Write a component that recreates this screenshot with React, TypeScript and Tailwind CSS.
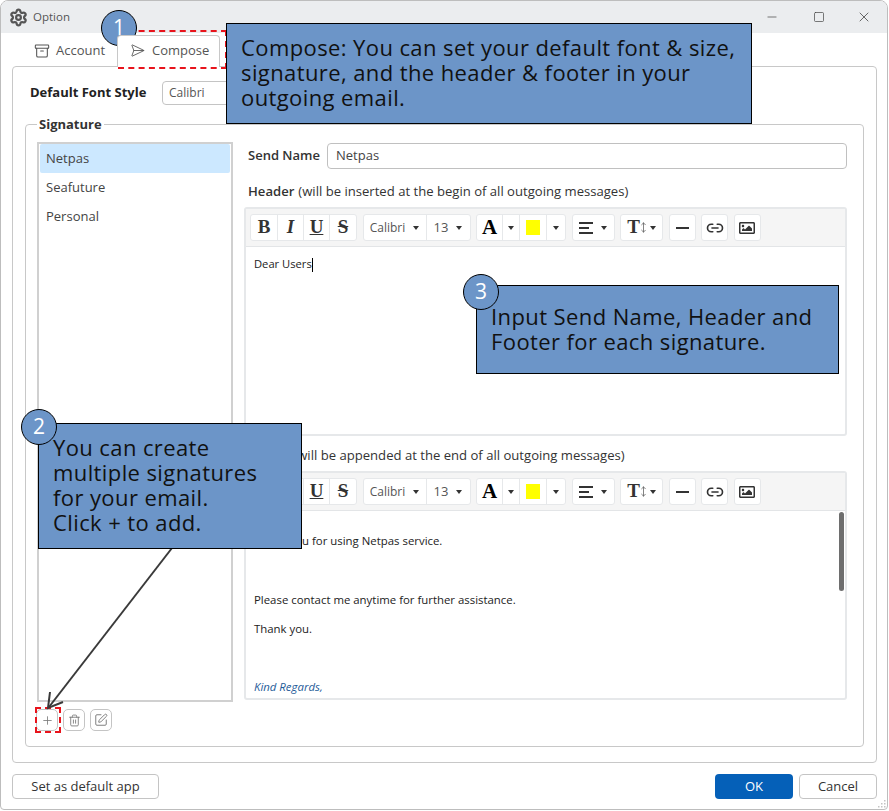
import React from "react";
import { Archive, Link2, Minus, MoveVertical, Plus, SendHorizontal, Settings, Square, SquarePen, Trash2, X } from "lucide-react";
import { FaRegImage } from "react-icons/fa";

const Caret = () => (
  <span className="inline-block w-0 h-0 border-x-[3.5px] border-x-transparent border-t-[4px] border-t-[#333]" />
);

const ToolBtn = ({ w, children, last }: { w: string; children: React.ReactNode; last?: boolean }) => (
  <div className={`${w} h-full flex items-center justify-center gap-[8px] ${last ? "" : "border-r border-[#e6e8ea]"}`}>
    {children}
  </div>
);

const Group = ({ children }: { children: React.ReactNode }) => (
  <div className="h-[27px] flex bg-white border border-[#e6e8ea] rounded-[3px] box-border">{children}</div>
);

const serif = "font-['Liberation_Serif',serif] font-bold text-[#333]";

const Toolbar = () => (
  <div className="h-[38px] shrink-0 flex items-center gap-[5.5px] pl-[4px] bg-[#f5f5f5] border-b border-[#e3e5e7]">
    <Group>
      <ToolBtn w="w-[27px]"><span className={`${serif} text-[19px]`}>B</span></ToolBtn>
      <ToolBtn w="w-[26px]"><span className={`${serif} italic text-[19px]`}>I</span></ToolBtn>
      <ToolBtn w="w-[26px]"><span className={`${serif} underline text-[19px]`}>U</span></ToolBtn>
      <ToolBtn w="w-[26px]" last><span className={`${serif} line-through text-[19px]`}>S</span></ToolBtn>
    </Group>
    <Group>
      <ToolBtn w="w-[63px]"><span className="text-[12px] text-[#555]">Calibri</span><Caret /></ToolBtn>
      <ToolBtn w="w-[43px]" last><span className="text-[13px] text-[#555]">13</span><Caret /></ToolBtn>
    </Group>
    <Group>
      <ToolBtn w="w-[26px]"><span className="font-['Liberation_Serif',serif] font-bold text-[21px] text-black">A</span></ToolBtn>
      <ToolBtn w="w-[17px]"><Caret /></ToolBtn>
      <ToolBtn w="w-[27px]"><span className="w-[14px] h-[15px] bg-[#ffff00]" /></ToolBtn>
      <ToolBtn w="w-[18px]" last><Caret /></ToolBtn>
    </Group>
    <Group>
      <ToolBtn w="w-[41px]" last>
        <span className="flex flex-col gap-[3px]">
          <span className="w-[14px] h-[2px] bg-[#333]" />
          <span className="w-[10px] h-[2px] bg-[#333]" />
          <span className="w-[14px] h-[2px] bg-[#333]" />
        </span>
        <Caret />
      </ToolBtn>
    </Group>
    <Group>
      <ToolBtn w="w-[41px]" last>
        <span className="flex items-center gap-[3px]">
          <span className="flex items-center">
            <span className={`${serif} text-[19px]`}>T</span>
            <MoveVertical size={11} strokeWidth={1.6} className="text-[#555] -mx-[2px]" />
          </span>
          <Caret />
        </span>
      </ToolBtn>
    </Group>
    <Group>
      <ToolBtn w="w-[25px]" last><span className="w-[13px] h-[2px] bg-[#333]" /></ToolBtn>
    </Group>
    <Group>
      <ToolBtn w="w-[25px]" last><Link2 size={18} strokeWidth={2.2} className="text-[#333]" /></ToolBtn>
    </Group>
    <Group>
      <ToolBtn w="w-[25px]" last><FaRegImage size={16} className="text-[#333]" /></ToolBtn>
    </Group>
  </div>
);

const SmallBtn = ({ children }: { children: React.ReactNode }) => (
  <div className="w-[22px] h-[22px] flex items-center justify-center border border-[#c4c4c4] rounded-[5px] text-[#777] bg-white box-border">
    {children}
  </div>
);

const EditorLabel = ({ label, note }: { label: string; note: string }) => (
  <div className="h-[18px] flex items-center pl-[4px] text-[13.1px] text-[#333]">
    <span className="font-semibold mr-[4px]">{label}</span>
    {note}
  </div>
);

const Badge = ({ pos, n }: { pos: string; n: string }) => (
  <div className={`absolute ${pos} w-[36px] h-[36px] rounded-full bg-[#6c95c8] border border-black flex items-center justify-center text-white text-[21px] box-border`}>
    {n}
  </div>
);

const callout = "absolute bg-[#6c95c8] border border-black box-border text-[22px] tracking-[0.4px] leading-[25px] text-[#111]";

export default function App() {
  return (
    <div className="relative w-[889px] h-[811px] bg-white font-['Open_Sans',sans-serif] overflow-hidden">
      <div className="w-[888px] h-[810px] border border-[#bdbdbd] rounded-t-[8px] rounded-b-[4px] box-border flex flex-col overflow-hidden">
        {/* title bar */}
        <div className="h-[32px] shrink-0 flex items-center bg-[#ebedef] pl-[8px]">
          <Settings size={19} strokeWidth={2.8} className="text-[#555]" />
          <span className="ml-[5px] text-[11.5px] text-[#555]">Option</span>
          <div className="ml-auto flex items-center gap-[34px] pr-[15px] text-[#444]">
            <Minus size={14} strokeWidth={1.2} />
            <Square size={12} strokeWidth={1.4} />
            <X size={16} strokeWidth={1.2} className="-ml-[3px]" />
          </div>
        </div>

        {/* tabs */}
        <div className="h-[33px] shrink-0 flex items-end pl-[20px]">
          <div className="h-[32px] w-[93px] flex items-center gap-[6px] pl-[13px] pt-[1px] text-[13px] text-[#555]">
            <Archive size={16} strokeWidth={1.6} />
            Account
          </div>
          <div className="h-[32px] w-[103px] ml-[3px] flex items-center gap-[7px] pl-[12px] pb-[2px] text-[13px] text-[#555] border border-b-0 border-[#c8c8c8] rounded-t-[4px] bg-white mb-[-1px] z-10 box-border">
            <SendHorizontal size={15} strokeWidth={1.4} />
            Compose
          </div>
        </div>

        {/* tab panel */}
        <div className="mx-[11px] w-[865px] h-[697px] shrink-0 border border-[#c8c8c8] rounded-[4px] box-border px-[12px] flex flex-col">
          <div className="h-[49px] shrink-0 flex items-center pl-[5px] pt-[2px]">
            <span className="w-[132px] text-[13px] font-bold text-[#222]">Default Font Style</span>
            <div className="w-[200px] h-[24px] border border-[#c4c4c4] rounded-[4px] flex items-center pl-[6px] text-[12px] text-[#555] box-border">
              Calibri
            </div>
          </div>

          <fieldset className="w-[839px] h-[631px] border border-[#c8c8c8] rounded-[4px] box-border px-[11px]">
            <legend className="px-[2px] text-[13px] font-bold text-[#333] leading-[16px]">Signature</legend>
            <div className="flex gap-[11px] pt-[10px]">
              <div className="w-[196px] shrink-0 flex flex-col">
                <div className="h-[560px] border-2 border-[#d0d0d0] box-border px-[1px] text-[13px] text-[#444]">
                  <div className="h-[29px] bg-[#cce8ff] rounded-[2px] flex items-center pl-[6px]">Netpas</div>
                  <div className="h-[29px] flex items-center pl-[6px]">Seafuture</div>
                  <div className="h-[29px] flex items-center pl-[6px]">Personal</div>
                </div>
                <div className="flex gap-[5px] mt-[7px] ml-[-1px]">
                  <SmallBtn><Plus size={13} strokeWidth={1.5} /></SmallBtn>
                  <SmallBtn><Trash2 size={13} strokeWidth={1.6} /></SmallBtn>
                  <SmallBtn><SquarePen size={14} strokeWidth={1.6} /></SmallBtn>
                </div>
              </div>

              <div className="w-[603px] shrink-0 flex flex-col">
                <div className="h-[26px] mt-[1px] flex items-center pl-[4px]">
                  <span className="w-[79px] text-[13px] font-semibold text-[#333]">Send Name</span>
                  <div className="flex-1 h-[26px] border border-[#c0c0c0] rounded-[4px] flex items-center pl-[8px] text-[13px] text-[#444] box-border">
                    Netpas
                  </div>
                </div>
                <div className="mt-[14px]">
                  <EditorLabel label="Header" note="(will be inserted at the begin of all outgoing messages)" />
                </div>
                <div className="mt-[6px] h-[229px] border-2 border-[#e6e8ea] rounded-[3px] box-border flex flex-col">
                  <Toolbar />
                  <div className="pl-[8px] pt-[9px] text-[11.2px] text-[#222] flex items-center h-[26px]">
                    Dear Users<span className="w-[1px] h-[14px] bg-black" />
                  </div>
                </div>
                <div className="mt-[11px]">
                  <EditorLabel label="Footer" note="(will be appended at the end of all outgoing messages)" />
                </div>
                <div className="mt-[6px] h-[229px] border-2 border-[#e6e8ea] rounded-[3px] box-border flex flex-col relative overflow-hidden">
                  <Toolbar />
                  <div className="pl-[8px] text-[11.4px] text-[#222] leading-[16px]">
                    <p className="mt-[22px]">Thank you for using Netpas service.</p>
                    <p className="mt-[43px]">Please contact me anytime for further assistance.</p>
                    <p className="mt-[13px]">Thank you.</p>
                    <p className="mt-[42px] italic text-[#1f5c99]">Kind Regards,</p>
                  </div>
                  <div className="absolute right-[1px] top-[39px] w-[5px] h-[79px] rounded-full bg-[#6e6e6e]" />
                </div>
              </div>
            </div>
          </fieldset>
        </div>

        {/* bottom buttons */}
        <div className="flex items-center mt-[11px] mx-[11px] w-[865px]">
          <div className="w-[147px] h-[25px] border border-[#c4c4c4] rounded-[4px] flex items-center justify-center text-[13px] text-[#333] box-border">
            Set as default app
          </div>
          <div className="ml-auto w-[78px] h-[25px] rounded-[4px] bg-[#0560b8] flex items-center justify-center text-[13px] text-white">
            OK
          </div>
          <div className="ml-[6px] w-[78px] h-[25px] border border-[#c4c4c4] rounded-[4px] flex items-center justify-center text-[13px] text-[#333] box-border">
            Cancel
          </div>
        </div>
      </div>

      {/* annotations over the screenshot */}
      <div className="absolute left-[118px] top-[30px] w-[109px] h-[39px] border-2 border-dashed border-[#e8141c] box-border" />
      <div className="absolute left-[35px] top-[707px] w-[26px] h-[26px] border-2 border-dashed border-[#e8141c] box-border" />

      <svg className="absolute left-0 top-0 pointer-events-none" width="889" height="811" fill="none">
        <path d="M172 548 L49 707" stroke="#3a3a3a" strokeWidth="2" />
        <path d="M50 692 L48 708 L63 702" stroke="#3a3a3a" strokeWidth="2" />
        <g fill="#c4c4c4">
          <rect x="884" y="800" width="1.5" height="1.5" />
          <rect x="881" y="803" width="1.5" height="1.5" />
          <rect x="884" y="803" width="1.5" height="1.5" />
          <rect x="878" y="806" width="1.5" height="1.5" />
          <rect x="881" y="806" width="1.5" height="1.5" />
          <rect x="884" y="806" width="1.5" height="1.5" />
        </g>
      </svg>

      <div className={`${callout} left-[226px] top-[23px] w-[526px] h-[101px] pl-[14px] pt-[11px]`}>
        Compose: You can set your default font &amp; size,
        <br />
        signature, and the header &amp; footer in your
        <br />
        outgoing email.
      </div>
      <Badge pos="left-[101px] top-[10px]" n="1" />

      <div className={`${callout} left-[38px] top-[423px] w-[264px] h-[126px] pl-[14px] pt-[11px]`}>
        You can create
        <br />
        multiple signatures
        <br />
        for your email.
        <br />
        Click + to add.
      </div>
      <Badge pos="left-[21px] top-[409px]" n="2" />

      <div className={`${callout} left-[476px] top-[285px] w-[363px] h-[89px] pl-[14px] pt-[18px]`}>
        Input Send Name, Header and
        <br />
        Footer for each signature.
      </div>
      <Badge pos="left-[463px] top-[274px]" n="3" />
    </div>
  );
}
